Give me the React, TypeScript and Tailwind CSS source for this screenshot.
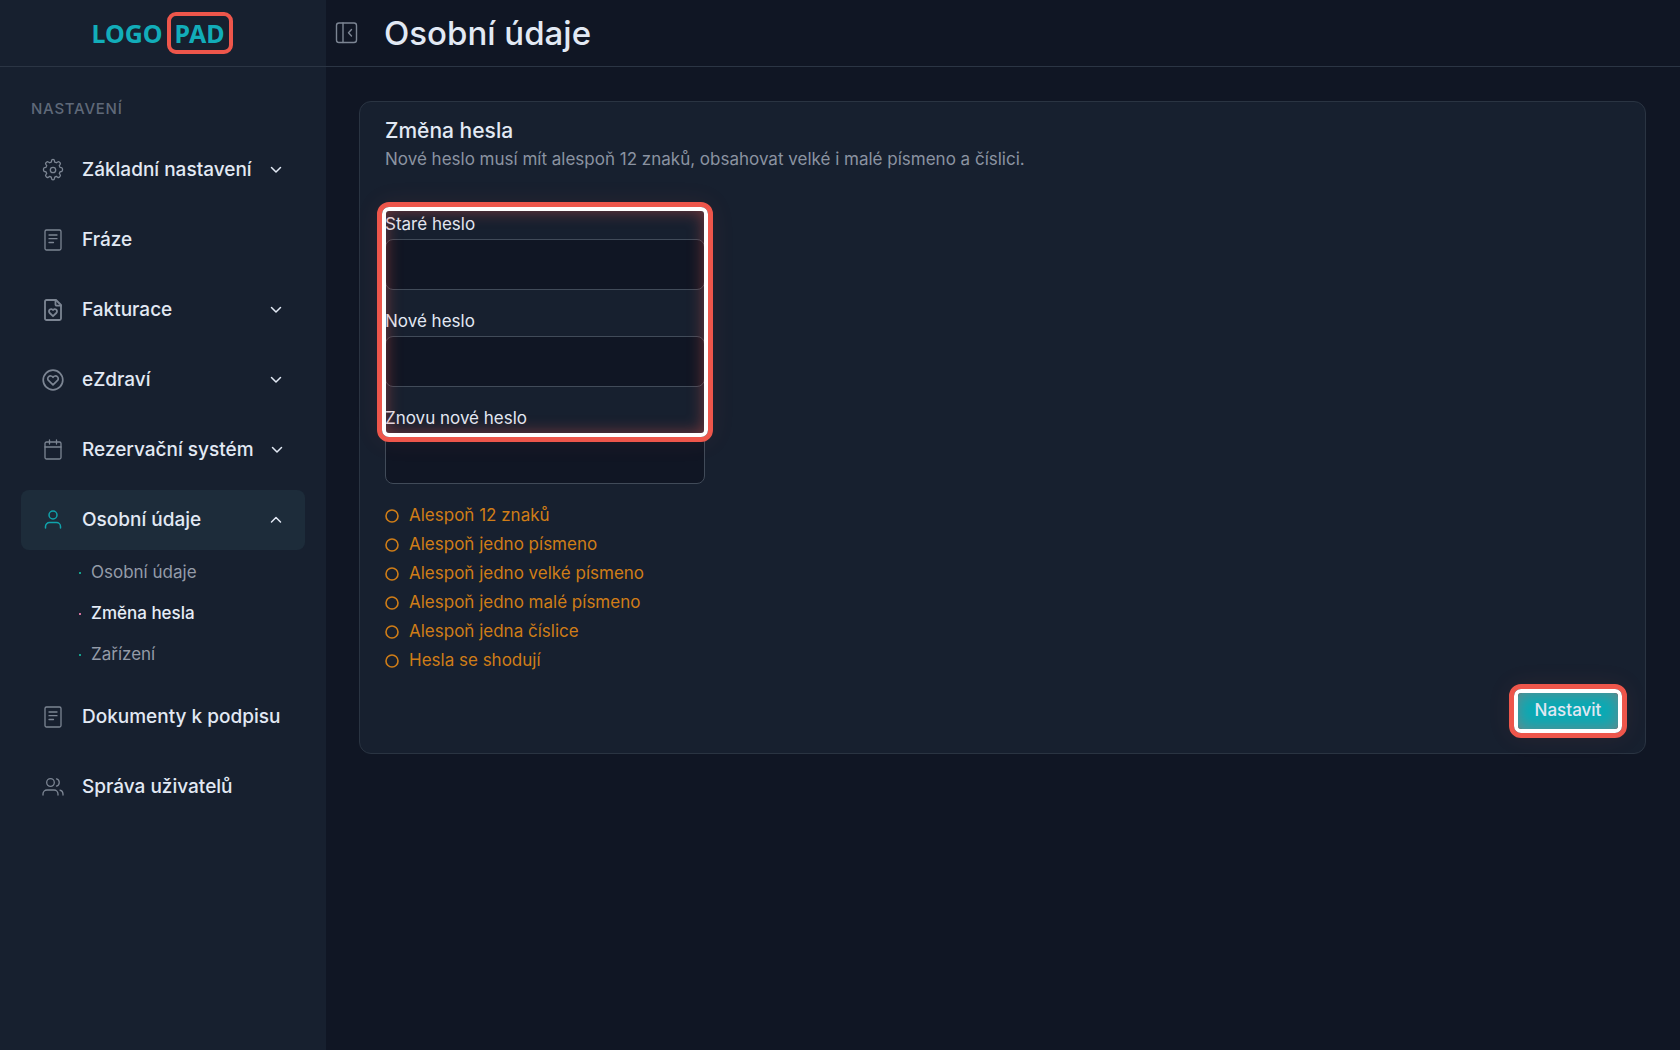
import { useState, type ReactNode } from "react";

const stroke = {
  fill: "none",
  stroke: "currentColor",
  strokeLinecap: "round",
  strokeLinejoin: "round",
} as const;

function Icon({ children, width = 1.3 }: { children: ReactNode; width?: number }) {
  return (
    <svg viewBox="0 0 24 24" className="size-6 shrink-0" strokeWidth={width} aria-hidden="true" {...stroke}>
      {children}
    </svg>
  );
}

const GearIcon = () => (
  <Icon width={1.3}>
    <circle cx="12" cy="12" r="2.7" />
    <path d="M10.6 2.8a1.4 1.4 0 0 1 2.8 0l.3 1.3a8 8 0 0 1 1.7.7l1.2-.8a1.4 1.4 0 0 1 1.9.2l.4.4a1.4 1.4 0 0 1 .2 1.9l-.8 1.2a8 8 0 0 1 .7 1.7l1.4.3a1.4 1.4 0 0 1 1.1 1.3v1.2a1.4 1.4 0 0 1-1.1 1.3l-1.4.3a8 8 0 0 1-.7 1.7l.8 1.2a1.4 1.4 0 0 1-.2 1.900l-.4.4a1.4 1.4 0 0 1-1.900.2l-1.200-.8a8 8 0 0 1-1.700.7l-.3 1.400a1.400 1.400 0 0 1-2.800 0l-.3-1.400a8 8 0 0 1-1.700-.7l-1.200.8a1.400 1.400 0 0 1-1.900-.2l-.4-.4a1.400 1.400 0 0 1-.2-1.900l.8-1.200a8 8 0 0 1-.7-1.700l-1.400-.3a1.400 1.400 0 0 1-1.100-1.300v-1.200a1.400 1.400 0 0 1 1.100-1.300l1.400-.3a8 8 0 0 1 .7-1.700l-.8-1.200a1.400 1.400 0 0 1 .2-1.900l.4-.4a1.400 1.400 0 0 1 1.900-.2l1.200.8a8 8 0 0 1 1.700-.7z" />
  </Icon>
);
const PageIcon = () => (
  <Icon>
    <rect x="4" y="2" width="16" height="20" rx="1.5" />
    <path d="M8 7h8M8 10.7h8M8 14.5h4.5" />
  </Icon>
);
const PageHeartIcon = () => (
  <Icon width={1.8}>
    <path d="M4 20.5v-17A1.5 1.5 0 0 1 5.5 2H15l5 5v13.5a1.5 1.5 0 0 1-1.5 1.5h-13A1.5 1.5 0 0 1 4 20.5z" />
    <path d="M14.5 2v4.5a1.2 1.2 0 0 0 1.2 1.2H20" />
    <path d="M12 18.2L8.7 15a2.3 2.3 0 0 1 0-3.3c1-.9 2.5-.8 3.3.4.8-1.2 2.3-1.3 3.3-.4a2.3 2.3 0 0 1 0 3.3z" />
  </Icon>
);
const HeartCircleIcon = () => (
  <Icon width={1.7}>
    <circle cx="12" cy="12" r="9.800" />
    <path d="M12 16.8l-4.3-4.1a2.6 2.6 0 0 1 0-4c1.200-1.100 3.300-1 4.300.6 1-1.600 3.100-1.700 4.300-.6a2.600 2.600 0 0 1 0 4z" />
  </Icon>
);
const CalendarIcon = () => (
  <Icon width={1.3}>
    <rect x="4" y="4" width="16" height="17" rx="1.5" />
    <path d="M4 9h16M8.5 2v4M15.5 2v4" />
  </Icon>
);
const UserIcon = () => (
  <Icon width={1.5}>
    <circle cx="12" cy="7" r="4" />
    <path d="M4.5 20v-1.500a4 4 0 0 1 4-4h7a4 4 0 0 1 4 4V20" />
  </Icon>
);
const UsersIcon = () => (
  <Icon>
    <circle cx="9.5" cy="7.5" r="3.8" />
    <path d="M2 20v-1a4 4 0 0 1 4-4h7a4 4 0 0 1 4 4v1M15.5 3.8a3.8 3.8 0 0 1 0 7.3M22 20v-1a4 4 0 0 0-3-3.9" />
  </Icon>
);

function Chevron({ up = false }: { up?: boolean }) {
  return (
    <svg viewBox="0 0 12 12" className="size-3 shrink-0" strokeWidth={1.5} aria-hidden="true" {...stroke}>
      <path d={up ? "M1.5 8 6 3.5 10.5 8" : "M1.5 3.5 6 8l4.5-4.5"} />
    </svg>
  );
}

function NavItem({
  icon,
  label,
  expandable = false,
  active = false,
}: {
  icon: ReactNode;
  label: string;
  expandable?: boolean;
  active?: boolean;
}) {
  const body = (
    <>
      <span className={active ? "text-[#10a3ab]" : "text-[#7c8593]"}>{icon}</span>
      <span className="grow text-left whitespace-nowrap">{label}</span>
      {expandable && <Chevron up={active} />}
    </>
  );
  return expandable ? (
    <button
      type="button"
      aria-expanded={active}
      className={
        active
          ? "flex h-15 w-full items-center gap-[17px] rounded-lg bg-[#1d2c3a] pr-[23px] pl-5 text-[19px] font-medium"
          : "flex h-15 w-full items-center gap-[17px] rounded-lg pr-[23px] pl-5 text-[19px] font-medium"
      }
    >
      {body}
    </button>
  ) : (
    <a href="#" className="flex h-15 items-center gap-[17px] rounded-lg pr-1 pl-5 text-[19px] font-medium">
      {body}
    </a>
  );
}

const subItems = [
  { label: "Osobní údaje", current: false },
  { label: "Změna hesla", current: true },
  { label: "Zařízení", current: false },
];

function Sidebar() {
  return (
    <aside className="w-[326px] shrink-0 bg-[#17202f]">
      <div className="flex h-[67px] items-center justify-center gap-1 border-b border-[#2b3544] pr-0.5 font-['Noto_Sans',sans-serif] text-[25px] leading-none font-bold text-[#12adb9]">
        <span>LOGO</span>
        <span className="flex h-[42px] w-[66px] items-center justify-center rounded-[9px] border-4 border-[#ee564b]">
          PAD
        </span>
      </div>
      <nav aria-label="Nastavení" className="px-[21px] pt-[30px]">
        <h2 className="px-[10px] text-[15px] leading-6 font-medium tracking-wider text-[#5f6979]">NASTAVENÍ</h2>
        <ul className="mt-[19px] flex flex-col gap-2.5">
          <li><NavItem icon={<GearIcon />} label="Základní nastavení" expandable /></li>
          <li><NavItem icon={<PageIcon />} label="Fráze" /></li>
          <li><NavItem icon={<PageHeartIcon />} label="Fakturace" expandable /></li>
          <li><NavItem icon={<HeartCircleIcon />} label="eZdraví" expandable /></li>
          <li><NavItem icon={<CalendarIcon />} label="Rezervační systém" expandable /></li>
          <li>
            <NavItem icon={<UserIcon />} label="Osobní údaje" expandable active />
            <ul className="pt-0.5 pb-0.5 pl-[58px]">
              {subItems.map((item) => (
                <li key={item.label}>
                  <a
                    href="#"
                    aria-current={item.current ? "page" : undefined}
                    className={
                      item.current
                        ? "flex h-[41px] items-center gap-2.5 text-[17px] font-medium text-[#e6edf7]"
                        : "flex h-[41px] items-center gap-2.5 text-[17px] text-[#949ba8]"
                    }
                  >
                    <span className={item.current ? "size-0.5 bg-[#d0709c]" : "size-0.5 bg-[#14a08c]"} />
                    {item.label}
                  </a>
                </li>
              ))}
            </ul>
          </li>
          <li><NavItem icon={<PageIcon />} label="Dokumenty k podpisu" /></li>
          <li><NavItem icon={<UsersIcon />} label="Správa uživatelů" /></li>
        </ul>
      </nav>
    </aside>
  );
}

function Field({ id, label }: { id: string; label: string }) {
  const [value, setValue] = useState("");
  return (
    <div>
      <label htmlFor={id} className="block text-[17px] leading-[30px]">
        {label}
      </label>
      <input
        id={id}
        type="password"
        value={value}
        onChange={(e) => setValue(e.target.value)}
        className="block h-[51px] w-full rounded-lg border border-[#414b59] bg-[#101624] px-3 outline-none"
      />
    </div>
  );
}

function Highlight({ className }: { className: string }) {
  return (
    <span aria-hidden="true" className={className}>
      <span className="block h-full rounded-[7px] border-4 border-white shadow-[inset_0_0_16px_rgba(238,86,75,0.45)]" />
    </span>
  );
}

const rules = [
  "Alespoň 12 znaků",
  "Alespoň jedno písmeno",
  "Alespoň jedno velké písmeno",
  "Alespoň jedno malé písmeno",
  "Alespoň jedna číslice",
  "Hesla se shodují",
];

export default function App() {
  return (
    <div className="flex min-h-screen bg-[#101624] font-[Inter,sans-serif] text-[#e2e9f4]">
      <Sidebar />
      <div className="min-w-0 grow">
        <header className="flex h-[67px] items-center gap-[26px] border-b border-[#2b3544] pl-2">
          <button type="button" aria-label="Skrýt panel" className="text-[#7c8593]">
            <svg viewBox="0 0 24 24" className="size-6" strokeWidth={1.4} {...stroke}>
              <rect x="2.5" y="2" width="20" height="19.5" rx="2.5" />
              <path d="M9 2v19.5M17.5 8.5l-3 3.2 3 3.2" />
            </svg>
          </button>
          <h1 className="text-[33px] leading-10 font-medium">Osobní údaje</h1>
        </header>
        <main className="pt-[34px] pr-[34px] pb-8 pl-[33px]">
          <form
            onSubmit={(e) => e.preventDefault()}
            className="rounded-xl border border-[#2a3442] bg-[#17202f] pt-3.5 pr-[27px] pb-6 pl-[25px]"
          >
            <h2 className="text-[21px] leading-[29px] font-medium">Změna hesla</h2>
            <p className="text-[17px] leading-7 text-[#8b93a1]">
              Nové heslo musí mít alespoň 12 znaků, obsahovat velké i malé písmeno a číslici.
            </p>
            <div className="relative mt-9 flex w-80 flex-col gap-4">
              <Field id="old-password" label="Staré heslo" />
              <Field id="new-password" label="Nové heslo" />
              <Field id="repeat-password" label="Znovu nové heslo" />
              <Highlight className="pointer-events-none absolute -inset-x-2 -top-[7px] h-[240px] rounded-xl border-5 border-[#ee564b] shadow-[0_0_24px_rgba(238,86,75,0.08)]" />
            </div>
            <ul className="mt-[17px] text-[17px] leading-[29px] text-[#d07d17]">
              {rules.map((rule) => (
                <li key={rule} className="flex items-center gap-2.5">
                  <svg viewBox="0 0 14 14" className="size-3.5" strokeWidth={1.6} aria-hidden="true" {...stroke}>
                    <circle cx="7" cy="7" r="6" />
                  </svg>
                  {rule}
                </li>
              ))}
            </ul>
            <div className="mt-[18px] flex justify-end">
              <div className="relative">
                <button
                  type="submit"
                  className="block h-9 w-[100px] rounded bg-[#08abb6] text-[17px] font-medium"
                >
                  Nastavit
                </button>
                <Highlight className="pointer-events-none absolute -inset-[9px] rounded-xl border-5 border-[#ee564b] shadow-[0_0_24px_rgba(238,86,75,0.08)]" />
              </div>
            </div>
          </form>
        </main>
      </div>
    </div>
  );
}
